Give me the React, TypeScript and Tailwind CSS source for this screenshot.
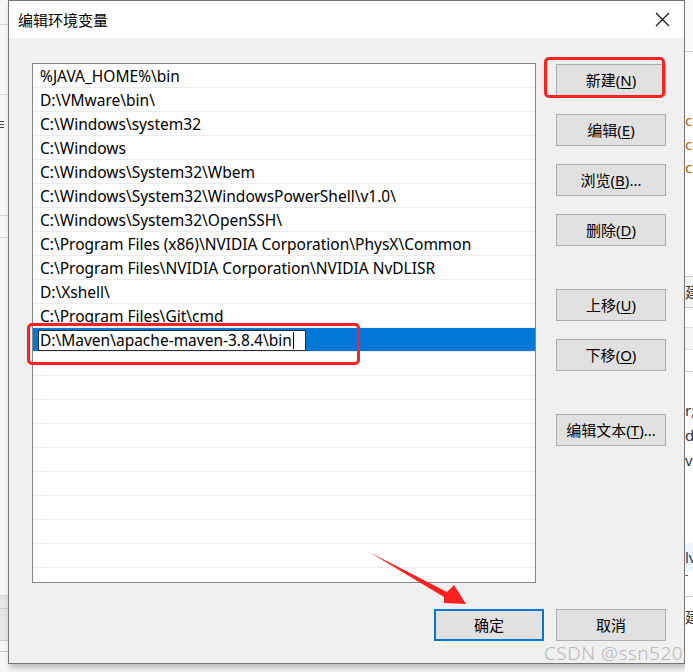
import React from "react";

const paths = [
  "%JAVA_HOME%\\bin",
  "D:\\VMware\\bin\\",
  "C:\\Windows\\system32",
  "C:\\Windows",
  "C:\\Windows\\System32\\Wbem",
  "C:\\Windows\\System32\\WindowsPowerShell\\v1.0\\",
  "C:\\Windows\\System32\\OpenSSH\\",
  "C:\\Program Files (x86)\\NVIDIA Corporation\\PhysX\\Common",
  "C:\\Program Files\\NVIDIA Corporation\\NVIDIA NvDLISR",
  "D:\\Xshell\\",
  "C:\\Program Files\\Git\\cmd",
];

const cjk = "font-['Microsoft_YaHei','Noto_Sans_CJK_SC',sans-serif]";
const latin = "font-['Segoe_UI','Noto_Sans','Noto_Sans_CJK_SC',sans-serif]";

const Btn = ({ label, hot, tail, className = "" }: { label: string; hot?: string; tail?: string; className?: string }) => (
  <div
    className={`w-[110px] h-[32px] flex items-center justify-center bg-[#e1e1e1] border border-[#adadad] text-[15px] text-black ${cjk} ${className}`}
  >
    {label}
    {hot && (
      <span className={latin}>
        (<span className="underline underline-offset-2">{hot}</span>){tail}
      </span>
    )}
  </div>
);

export default function App() {
  return (
    <div className="relative w-[693px] h-[672px] overflow-hidden bg-[#f2f2f2] flex items-start">
      {/* background window, left side */}
      <div className="w-[8px] h-[672px] flex flex-col bg-[#f7f7f7] overflow-hidden">
        <div className="h-[25px] border-b border-[#d9d9d9]" />
        <div className="h-[70px] border-b border-[#d9d9d9]" />
        <div className="h-[121px] border-b border-[#d9d9d9] pt-[26px] flex flex-col gap-[2px]">
          <div className="w-[4px] h-[1px] bg-[#444]" />
          <div className="w-[4px] h-[1px] bg-[#444]" />
          <div className="w-[4px] h-[1px] bg-[#444]" />
        </div>
        <div className="h-[22px] border-b border-[#d9d9d9]" />
        <div className="h-[358px] border-b border-[#d9d9d9]" />
        <div className="h-[13px] border-b border-[#cfcfcf] bg-[#e6e6e6]" />
        <div className="h-[32px] border-b border-[#cfcfcf] bg-[#e6e6e6]" />
        <div className="h-[11px] border-b border-[#cfcfcf]" />
      </div>

      {/* dialog */}
      <div className="w-[677px] h-[664px] flex flex-col border border-[#757575] shadow-[2px_3px_6px_rgba(0,0,0,0.25)] bg-[#f0f0f0]">
        <div className="h-[37px] bg-white flex items-center justify-between pl-[9px] pr-[14px]">
          <span className={`text-[15px] text-black pt-[2px] ${cjk}`}>编辑环境变量</span>
          <svg width="15" height="15" viewBox="0 0 15 15">
            <path d="M1 1 L14 14 M14 1 L1 14" stroke="#111" strokeWidth="1.1" />
          </svg>
        </div>

        <div className="flex-1 flex flex-col pl-[23px] pr-[18px] pt-[25px]">
          <div className="flex">
            <div className="w-[504px] h-[520px] border border-[#828790] bg-white overflow-hidden">
              {paths.map((p) => (
                <div
                  key={p}
                  className={`h-[24px] border-b border-[#ececec] pl-[7px] pt-[2px] flex items-center text-[15.5px] text-black whitespace-nowrap ${latin}`}
                >
                  {p}
                </div>
              ))}
              <div className="h-[24px] bg-[#0078d7] border-b border-[#ececec] pl-[5px] flex items-start">
                <div className={`mt-[2px] w-[268px] h-[21px] bg-white border border-[#2b2b2b] pl-[1px] flex items-center text-[15.5px] text-black whitespace-nowrap ${latin}`}>
                  D:\Maven\apache-maven-3.8.4\bin
                  <span className="inline-block w-[1px] h-[17px] bg-black ml-[1px]" />
                </div>
              </div>
              {Array.from({ length: 10 }).map((_, i) => (
                <div key={i} className="h-[24px] border-b border-[#ececec]" />
              ))}
            </div>

            <div className="ml-[20px] flex flex-col pt-[1px]">
              <Btn label="新建" hot="N" />
              <Btn label="编辑" hot="E" className="mt-[18px]" />
              <Btn label="浏览" hot="B" tail="..." className="mt-[18px]" />
              <Btn label="删除" hot="D" className="mt-[18px]" />
              <Btn label="上移" hot="U" className="mt-[43px]" />
              <Btn label="下移" hot="O" className="mt-[18px]" />
              <Btn label="编辑文本" hot="T" tail="..." className="mt-[43px]" />
            </div>
          </div>

          <div className="flex justify-end gap-[12px] mt-[26px]">
            <div className={`w-[110px] h-[32px] flex items-center justify-center bg-[#e1e1e1] border-2 border-[#0078d7] text-[15px] text-black ${cjk}`}>
              确定
            </div>
            <Btn label="取消" />
          </div>
        </div>
      </div>

      {/* background window, right side */}
      <div className={`flex-1 h-[672px] flex flex-col bg-white text-[15px] text-[#333] overflow-hidden whitespace-nowrap ${latin}`}>
        <div className="h-[52px] border-b border-[#d4d4d4] bg-[#fafafa]" />
        <div className="h-[56px]" />
        <div className="h-[25px] leading-[25px] text-[#b06000]">c</div>
        <div className="h-[23px] leading-[23px] text-[#b06000]">c</div>
        <div className="h-[23px] leading-[23px] text-[#b06000]">c</div>
        <div className="h-[97px]" />
        <div className="h-[32px] border-t border-b border-[#cfcfcf] bg-[#f3f3f3] flex items-center">
          <span className={cjk}>建</span>
        </div>
        <div className="h-[20px] border-b border-[#e0e0e0]" />
        <div className="h-[22px] border-b border-[#e0e0e0] bg-[#f5f5f5]" />
        <div className="h-[22px] border-b border-[#cfcfcf]" />
        <div className="h-[26px]" />
        <div className="h-[25px] leading-[25px]">r;</div>
        <div className="h-[25px] leading-[25px]">d.</div>
        <div className="h-[25px] leading-[25px]">ve</div>
        <div className="h-[70px]" />
        <div className="h-[28px] leading-[28px] bg-[#eef4fb] text-[#1e3a6a]">lv</div>
        <div className="h-[10px] text-[10px] leading-[6px]">-</div>
        <div className="h-[16px] border-b border-[#cfcfcf]" />
        <div className="h-[40px] flex items-center">
          <span className={cjk}>建</span>
        </div>
      </div>

      {/* annotations */}
      <div className="absolute left-[544px] top-[57px] w-[121px] h-[41px] border-[3px] border-[#ff2020] rounded-[5px]" />
      <div className="absolute left-[27px] top-[323px] w-[333px] h-[42px] border-[3px] border-[#ff2020] rounded-[5px]" />
      <svg className="absolute left-0 top-0" width="693" height="672">
        <polygon points="369,552 447,592 454,585 466,604 444,603 444,597" fill="#ff2020" />
      </svg>
      <div className="absolute left-[544px] top-[643px] text-[19px] leading-[20px] text-[#b8b8b8] font-['Noto_Sans',sans-serif] font-light tracking-[0.5px] whitespace-nowrap">
        CSDN @ssn520<span className="text-[10px]">⁞</span>
      </div>
    </div>
  );
}
